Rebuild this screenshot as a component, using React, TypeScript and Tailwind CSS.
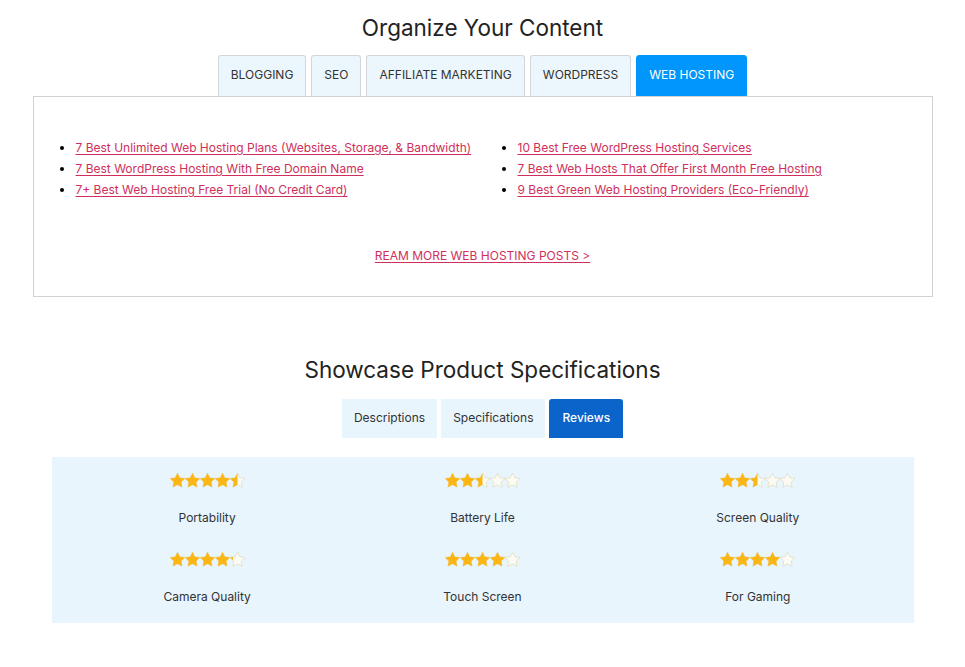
import { useId } from 'react'

const categories = ['Blogging', 'SEO', 'Affiliate Marketing', 'WordPress', 'Web Hosting']

const leftPosts = [
  '7 Best Unlimited Web Hosting Plans (Websites, Storage, & Bandwidth)',
  '7 Best WordPress Hosting With Free Domain Name',
  '7+ Best Web Hosting Free Trial (No Credit Card)',
]

const rightPosts = [
  '10 Best Free WordPress Hosting Services',
  '7 Best Web Hosts That Offer First Month Free Hosting',
  '9 Best Green Web Hosting Providers (Eco-Friendly)',
]

const ratings = [
  { label: 'Portability', value: 4.5 },
  { label: 'Battery Life', value: 2.5 },
  { label: 'Screen Quality', value: 2.5 },
  { label: 'Camera Quality', value: 4.2 },
  { label: 'Touch Screen', value: 4 },
  { label: 'For Gaming', value: 4 },
]

const STAR = '12,2 15.09,8.26 22,9.27 17,14.14 18.18,21.02 12,17.77 5.82,21.02 7,14.14 2,9.27 8.91,8.26'

function Star({ fill }: { fill: number }) {
  const id = useId()
  return (
    <svg width="15" height="15" viewBox="2 2 20 20" className="block">
      <defs>
        <clipPath id={id}>
          <rect x="2" y="0" width={20 * fill} height="24" />
        </clipPath>
      </defs>
      <polygon points={STAR} fill="#fbfbf3" stroke="#dfdcbf" strokeWidth="1" />
      {fill > 0 && <polygon points={STAR} fill="#fbb515" clipPath={`url(#${id})`} />}
    </svg>
  )
}

function Stars({ value }: { value: number }) {
  return (
    <div className="flex">
      {[0, 1, 2, 3, 4].map((i) => (
        <Star key={i} fill={Math.max(0, Math.min(1, value - i))} />
      ))}
    </div>
  )
}

export default function App() {
  return (
    <div className="min-h-screen bg-white font-['Inter','Liberation_Sans',sans-serif] text-[#222]">
      {/* Organize Your Content */}
      <section className="pt-3">
        <h2 className="text-center text-[22.5px] leading-8">Organize Your Content</h2>

        <div className="mt-[11px] flex justify-center gap-[5px]">
          {categories.map((c) => {
            const active = c === 'Web Hosting'
            return (
              <button
                key={c}
                className={
                  active
                    ? 'h-[41px] rounded-t-[3px] border border-[#0096fb] bg-[#0096fb] px-[12px] pb-[2px] text-[12px] uppercase text-white'
                    : 'h-[41px] rounded-t-[3px] border border-b-0 border-[#d3d6da] bg-[#ecf6fd] px-[12px] pb-[2px] text-[12px] uppercase text-[#333]'
                }
              >
                {c}
              </button>
            )
          })}
        </div>

        <div className="mx-auto w-[900px] border border-[#d2d2d2] px-[7px] pb-[30px] pt-[40px]">
          <div className="grid grid-cols-2">
            {[leftPosts, rightPosts].map((posts, col) => (
              <ul key={col} className="list-disc pl-[34px] text-[12px] leading-[21px] marker:text-black">
                {posts.map((p) => (
                  <li key={p} className="pl-[1px]">
                    <a href="#" className="whitespace-nowrap text-[#cf2f5a] underline underline-offset-2">
                      {p}
                    </a>
                  </li>
                ))}
              </ul>
            ))}
          </div>
          <div className="mt-[45px] text-center text-[12px] leading-[21px]">
            <a href="#" className="uppercase text-[#cf2f5a] underline underline-offset-2">
              Ream more web hosting posts &gt;
            </a>
          </div>
        </div>
      </section>

      {/* Showcase Product Specifications */}
      <section className="mt-[57px] pb-10">
        <h2 className="text-center text-[22.5px] leading-8">Showcase Product Specifications</h2>

        <div className="mt-[13px] flex justify-center gap-[4px]">
          {['Descriptions', 'Specifications', 'Reviews'].map((t) => (
            <button
              key={t}
              className={
                t === 'Reviews'
                  ? 'h-[39px] rounded-t-[3px] bg-[#0a64c9] px-[13px] pb-[2px] text-[12px] font-medium text-white'
                  : 'h-[39px] bg-[#e9f5fd] px-[12px] pb-[2px] text-[12px] text-[#333]'
              }
            >
              {t}
            </button>
          ))}
        </div>

        <div className="mx-auto mt-[19px] grid w-[862px] grid-cols-3 gap-y-[24px] bg-[#e8f5fd] px-[18px] py-[16px]">
          {ratings.map((r) => (
            <div key={r.label} className="flex flex-col items-center">
              <Stars value={r.value} />
              <div className="mt-[20px] text-[12px] leading-5 text-[#333]">{r.label}</div>
            </div>
          ))}
        </div>
      </section>
    </div>
  )
}
